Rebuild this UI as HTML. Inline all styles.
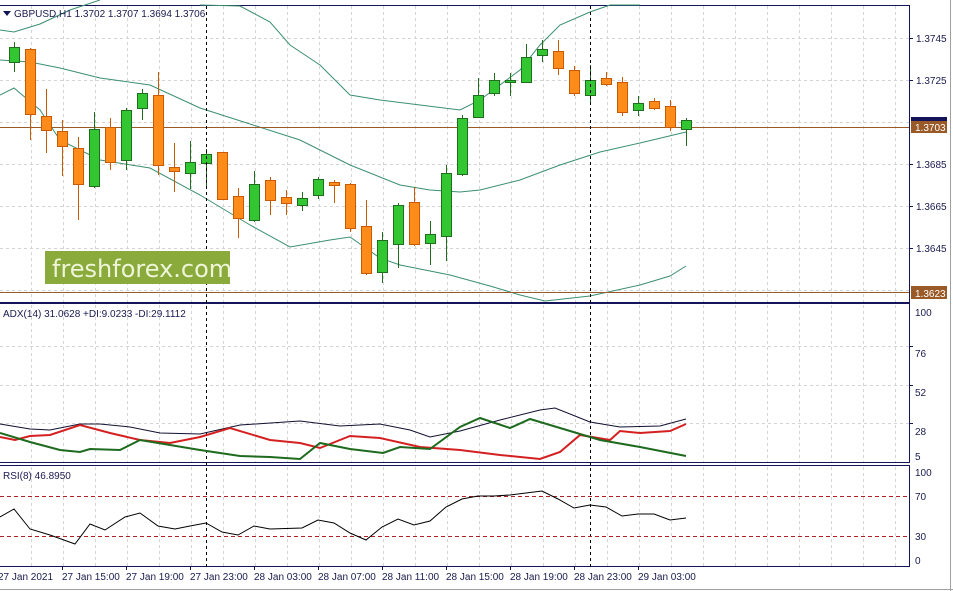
<!DOCTYPE html>
<html><head><meta charset="utf-8"><style>
html,body{margin:0;padding:0;background:#fff;width:953px;height:591px;overflow:hidden}
svg{display:block;font-family:"Liberation Sans",Tahoma,sans-serif}
.g{fill:#33c633;stroke:#1e6e1e;stroke-width:1}
.o{fill:#ff8c1a;stroke:#c85a00;stroke-width:1}
.wg{stroke:#1e6e1e}.wo{stroke:#c85a00}
.ax{font-size:10px;fill:#1a1a50}
</style></head><body>
<svg width="953" height="591" viewBox="0 0 953 591" xmlns="http://www.w3.org/2000/svg">
<rect width="953" height="591" fill="#fff"/>
<!-- grid -->
<g stroke="#d4d4d4" stroke-dasharray="3,3" stroke-width="1">
<path d="M31.5 6V302M63.5 6V302M95.5 6V302M127.5 6V302M159.5 6V302M191.5 6V302M223.5 6V302M255.5 6V302M287.5 6V302M319.5 6V302M351.5 6V302M383.5 6V302M415.5 6V302M447.5 6V302M479.5 6V302M511.5 6V302M543.5 6V302M575.5 6V302M607.5 6V302M639.5 6V302M671.5 6V302M703.5 6V302M735.5 6V302M767.5 6V302M799.5 6V302M831.5 6V302M863.5 6V302M895.5 6V302"/>
<path d="M31.5 305V462M63.5 305V462M95.5 305V462M127.5 305V462M159.5 305V462M191.5 305V462M223.5 305V462M255.5 305V462M287.5 305V462M319.5 305V462M351.5 305V462M383.5 305V462M415.5 305V462M447.5 305V462M479.5 305V462M511.5 305V462M543.5 305V462M575.5 305V462M607.5 305V462M639.5 305V462M671.5 305V462M703.5 305V462M735.5 305V462M767.5 305V462M799.5 305V462M831.5 305V462M863.5 305V462M895.5 305V462"/>
<path d="M31.5 467V566M63.5 467V566M95.5 467V566M127.5 467V566M159.5 467V566M191.5 467V566M223.5 467V566M255.5 467V566M287.5 467V566M319.5 467V566M351.5 467V566M383.5 467V566M415.5 467V566M447.5 467V566M479.5 467V566M511.5 467V566M543.5 467V566M575.5 467V566M607.5 467V566M639.5 467V566M671.5 467V566M703.5 467V566M735.5 467V566M767.5 467V566M799.5 467V566M831.5 467V566M863.5 467V566M895.5 467V566"/>
<path d="M0 38.5H909M0 80.5H909M0 122.5H909M0 164.5H909M0 206.5H909M0 248.5H909M0 290.5H909"/>
<path d="M0 346.5H909M0 385.5H909M0 423.5H909"/>
</g>
<!-- frames -->
<g fill="none" stroke="#14145a" stroke-width="1">
<rect x="-1" y="5.5" width="910.5" height="297"/>
<rect x="-1" y="303.5" width="910.5" height="159"/>
<rect x="-1" y="465.5" width="910.5" height="101"/>
</g>
<path d="M950.5 0V591" stroke="#a0a0a0"/>
<!-- bollinger -->
<g fill="none" stroke="#3c8f70" stroke-width="1">
<polyline points="0,30 14,32 40,24 70,10 100,0"/>
<polyline points="200,5 240,6 270,22 290,45 320,65 350,95 380,100 420,105 460,110 480,100 500,85 520,70 540,45 560,25 590,12 610,5 640,5"/>
<polyline points="0,60 30,62 60,68 100,78 150,85 200,108 250,124 300,140 350,165 400,185 430,190 460,192 480,190 520,180 560,165 600,152 640,143 686,132"/>
<polyline points="0,95 14,88 40,110 60,140 100,160 150,168 200,195 250,225 290,247 330,240 350,237 380,258 400,265 450,275 490,286 520,295 545,301 590,296 640,285 670,276 686,266"/>
</g>
<!-- horizontal price lines -->
<path d="M0 127.5H909M0 292.5H909" stroke="#9a5a28" stroke-width="1"/>
<!-- wicks -->
<g stroke-width="1">
<path class="wg" d="M14.5 42V72M94.5 112V188M126.5 108V170M142.5 89V120M190.5 141V189M206.5 149V187M254.5 171V222M302.5 192V211M318.5 177V199M382.5 232V283M398.5 203V268M430.5 221V265M446.5 165V261M462.5 115V176M478.5 78V118M494.5 73V96M510.5 73V96M526.5 44V83M542.5 40V62M590.5 65V103M638.5 96V116M686.5 118V146"/>
<path class="wo" d="M30.5 48V140M46.5 89V153M62.5 120V176M78.5 137V220M110.5 118V170M158.5 72V175M174.5 143V192M222.5 152V200M238.5 188V238M270.5 177V215M286.5 190V215M334.5 180V203M350.5 183V232M366.5 200V275M414.5 187V246M558.5 40V75M574.5 66V96M606.5 72V86M622.5 77V116M654.5 98V110M670.5 100V131"/>
</g>
<!-- bodies -->
<g>
<rect class="g" x="9.5" y="47.5" width="10" height="15"/>
<rect class="o" x="25.5" y="49.5" width="10" height="65"/>
<rect class="o" x="41.5" y="116.5" width="10" height="14"/>
<rect class="o" x="57.5" y="131.5" width="10" height="15"/>
<rect class="o" x="73.5" y="148.5" width="10" height="36"/>
<rect class="g" x="89.5" y="129.5" width="10" height="57"/>
<rect class="o" x="105.5" y="127.5" width="10" height="35"/>
<rect class="g" x="121.5" y="110.5" width="10" height="50"/>
<rect class="g" x="137.5" y="93.5" width="10" height="15"/>
<rect class="o" x="153.5" y="95.5" width="10" height="70"/>
<rect class="o" x="169.5" y="167.5" width="10" height="4"/>
<rect class="g" x="185.5" y="162.5" width="10" height="11"/>
<rect class="g" x="201.5" y="154.5" width="10" height="9"/>
<rect class="o" x="217.5" y="152.5" width="10" height="47"/>
<rect class="o" x="233.5" y="196.5" width="10" height="22"/>
<rect class="g" x="249.5" y="184.5" width="10" height="36"/>
<rect class="o" x="265.5" y="180.5" width="10" height="20"/>
<rect class="o" x="281.5" y="197.5" width="10" height="6"/>
<rect class="g" x="297.5" y="198.5" width="10" height="7"/>
<rect class="g" x="313.5" y="179.5" width="10" height="16"/>
<rect class="o" x="329.5" y="182.5" width="10" height="3"/>
<rect class="o" x="345.5" y="184.5" width="10" height="44"/>
<rect class="o" x="361.5" y="226.5" width="10" height="47"/>
<rect class="g" x="377.5" y="240.5" width="10" height="32"/>
<rect class="g" x="393.5" y="205.5" width="10" height="39"/>
<rect class="o" x="409.5" y="202.5" width="10" height="42"/>
<rect class="g" x="425.5" y="234.5" width="10" height="9"/>
<rect class="g" x="441.5" y="173.5" width="10" height="63"/>
<rect class="g" x="457.5" y="118.5" width="10" height="56"/>
<rect class="g" x="473.5" y="95.5" width="10" height="22"/>
<rect class="g" x="489.5" y="80.5" width="10" height="13"/>
<rect class="g" x="505.5" y="80.5" width="10" height="2"/>
<rect class="g" x="521.5" y="57.5" width="10" height="25"/>
<rect class="g" x="537.5" y="49.5" width="10" height="6"/>
<rect class="o" x="553.5" y="51.5" width="10" height="17"/>
<rect class="o" x="569.5" y="70.5" width="10" height="23"/>
<rect class="g" x="585.5" y="80.5" width="10" height="15"/>
<rect class="o" x="601.5" y="78.5" width="10" height="6"/>
<rect class="o" x="617.5" y="82.5" width="10" height="30"/>
<rect class="g" x="633.5" y="103.5" width="10" height="7"/>
<rect class="o" x="649.5" y="101.5" width="10" height="7"/>
<rect class="o" x="665.5" y="106.5" width="10" height="21"/>
<rect class="g" x="681.5" y="120.5" width="10" height="9"/>
</g>
<!-- dashed verticals -->
<path d="M206.5 6V567M590.5 6V567" stroke="#000" stroke-dasharray="3,3"/>
<!-- logo -->
<rect x="45" y="251" width="185" height="33" fill="#8aaa3c"/>
<text x="52" y="277" font-size="24" fill="#eef5d8" font-family="'DejaVu Sans','Liberation Sans',sans-serif">freshforex.com</text>
<!-- header -->
<path d="M3 11h8l-4 5z" fill="#14145a"/>
<text x="14" y="17" class="ax">GBPUSD,H1  1.3702 1.3707 1.3694 1.3706</text>
<!-- right axis main -->
<g class="ax">
<path d="M909 38.5h4M909 80.5h4M909 164.5h4M909 206.5h4M909 248.5h4" stroke="#14145a"/>
<text x="916" y="42">1.3745</text>
<text x="916" y="84">1.3725</text>
<text x="916" y="168">1.3685</text>
<text x="916" y="210">1.3665</text>
<text x="916" y="252">1.3645</text>
</g>
<rect x="911" y="117" width="36" height="7" fill="#14145a"/>
<rect x="911" y="121" width="36" height="12" fill="#9a5a28"/>
<text x="915" y="131" font-size="10" fill="#fff">1.3703</text>
<rect x="911" y="286" width="36" height="13" fill="#9a5a28"/>
<text x="915" y="297" font-size="10" fill="#fff">1.3623</text>
<!-- ADX -->
<text x="3" y="317" class="ax">ADX(14) 31.0628 +DI:9.0233 -DI:29.1112</text>
<g class="ax">
<path d="M909 346.5h4M909 385.5h4M909 423.5h4" stroke="#14145a"/>
<text x="915" y="316">100</text><text x="915" y="357">76</text><text x="915" y="396">52</text><text x="915" y="435">28</text><text x="915" y="460">5</text>
</g>
<g fill="none">
<polyline stroke="#101030" stroke-width="1" points="0,424 30,429 50,430 80,424 100,424 130,427 160,433 200,434 240,425 300,421 340,426 380,424 410,430 430,437 460,431 500,420 540,410 555,408 590,422 620,427 660,426 686,419"/>
<polyline stroke="#d42020" stroke-width="2" points="0,437 15,440 30,436 50,435 80,425 110,433 140,440 170,443 200,437 230,428 270,440 300,443 320,448 350,436 380,438 420,447 460,450 500,455 540,459 560,452 580,435 610,440 620,431 640,433 670,431 686,424"/>
<polyline stroke="#1e6a1e" stroke-width="2" points="0,433 30,442 60,450 80,452 90,449 120,450 140,440 170,445 200,450 240,456 270,457 300,459 320,443 350,449 383,453 400,447 430,449 460,427 480,418 510,428 530,419 560,428 600,440 640,447 686,456"/>
</g>
<!-- RSI -->
<text x="3" y="479" class="ax">RSI(8) 46.8950</text>
<path d="M0 496.5H909M0 536.5H909" stroke="#b02020" stroke-dasharray="4,3"/>
<g class="ax">
<text x="915" y="476">100</text><text x="915" y="500">70</text><text x="915" y="540">30</text><text x="915" y="564">0</text>
</g>
<polyline fill="none" stroke="#000" stroke-width="1" points="0,517 14,509 30,529 50,535 75,544 90,524 105,530 125,517 140,513 158,526 175,529 190,526 206,523 222,532 238,535 254,526 270,529 302,528 318,520 334,523 350,533 366,540 382,527 398,519 414,525 430,521 446,507 462,499 478,496 494,496 510,495 526,493 542,491 558,499 574,508 590,505 606,507 622,516 638,514 654,514 670,520 686,518"/>
<!-- time axis -->
<g class="ax">
<path d="M62.5 567v3M126.5 567v3M190.5 567v3M254.5 567v3M318.5 567v3M382.5 567v3M446.5 567v3M510.5 567v3M574.5 567v3M638.5 567v3" stroke="#14145a"/>
<text x="-2" y="580">27 Jan 2021</text>
<text x="62" y="580">27 Jan 15:00</text>
<text x="126" y="580">27 Jan 19:00</text>
<text x="190" y="580">27 Jan 23:00</text>
<text x="254" y="580">28 Jan 03:00</text>
<text x="318" y="580">28 Jan 07:00</text>
<text x="382" y="580">28 Jan 11:00</text>
<text x="446" y="580">28 Jan 15:00</text>
<text x="510" y="580">28 Jan 19:00</text>
<text x="574" y="580">28 Jan 23:00</text>
<text x="638" y="580">29 Jan 03:00</text>
</g>
<path d="M0 589.5H953" stroke="#a0a0a0"/>
</svg>
</body></html>
